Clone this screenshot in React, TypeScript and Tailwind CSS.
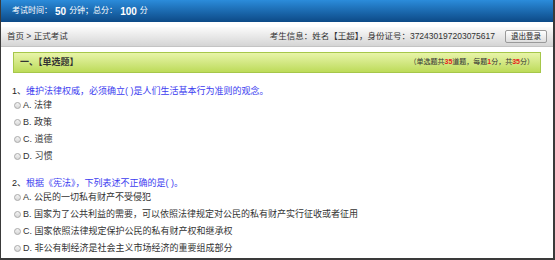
import React from "react";

interface Question {
  no: number;
  title: string;
  options: string[];
}

const questions: Question[] = [
  {
    no: 1,
    title: "维护法律权威，必须确立( )是人们生活基本行为准则的观念。",
    options: ["A. 法律", "B. 政策", "C. 道德", "D. 习惯"],
  },
  {
    no: 2,
    title: "根据《宪法》，下列表述不正确的是( )。",
    options: [
      "A. 公民的一切私有财产不受侵犯",
      "B. 国家为了公共利益的需要，可以依照法律规定对公民的私有财产实行征收或者征用",
      "C. 国家依照法律规定保护公民的私有财产权和继承权",
      "D. 非公有制经济是社会主义市场经济的重要组成部分",
    ],
  },
];

function Radio() {
  return (
    <span className="inline-block w-[7px] h-[7px] rounded-full border border-[#a9a9a9] bg-linear-to-b from-[#f4f4f4] to-[#d8d8d8] mr-[2px] shrink-0" />
  );
}

export default function App() {
  return (
    <div
      className="w-[555px] h-[260px] bg-white border-l border-r-2 border-b-2 border-[#3a3a3a] flex flex-col overflow-hidden text-[#333]"
      style={{ fontFamily: '"Liberation Sans", "Noto Sans CJK SC", sans-serif' }}
    >
      {/* top bar */}
      <div className="h-[22px] shrink-0 bg-linear-to-b from-[#2b8cdb] to-[#0d4a87] flex items-center pl-[11px] text-white text-[8px]">
        <span>考试时间：</span>
        <span className="text-[10px] font-bold mx-[3px]">50</span>
        <span>分钟；总分：</span>
        <span className="text-[10px] font-bold mx-[3px]">100</span>
        <span>分</span>
      </div>

      {/* breadcrumb */}
      <div className="mt-[5px] h-[20px] shrink-0 bg-linear-to-b from-[#fbfbfb] to-[#d5d5d5] border-b border-[#c4c4c4] flex items-center justify-between pl-[6px] pr-[6px] text-[8.5px]">
        <span>首页 &gt; 正式考试</span>
        <div className="flex items-center">
          <span>考生信息：姓名【王超】，身份证号：372430197203075617</span>
          <button className="ml-[10px] h-[13px] w-[42px] flex items-center justify-center border border-[#9a9a9a] rounded-[2px] bg-linear-to-b from-white to-[#dedede] text-[7.5px] text-[#222]">
            退出登录
          </button>
        </div>
      </div>

      {/* section header */}
      <div className="mt-[5px] mx-[12px] h-[21px] shrink-0 border border-[#a6c74a] bg-linear-to-b from-[#e8f4a8] to-[#bddb58] flex items-center justify-between pl-[6px] pr-[6px]">
        <span className="text-[9px] font-bold text-[#333]">一、【单选题】</span>
        <span className="text-[7px] text-[#333]">
          （单选题共<b className="text-[#e8201c]">35</b>道题，每题<b className="text-[#e8201c]">1</b>分，共<b className="text-[#e8201c]">35</b>分）
        </span>
      </div>

      {/* questions */}
      <div className="px-[11px] mt-[12px] flex flex-col gap-[12px] text-[9px]">
        {questions.map((q) => (
          <div key={q.no} className="flex flex-col">
            <div className="h-[12px] leading-[12px]">
              <span className="text-[#222]">{q.no}、</span>
              <span className="text-[#3c3cf0]">{q.title}</span>
            </div>
            {q.options.map((opt) => (
              <div key={opt} className="h-[17px] flex items-center pl-[2px]">
                <Radio />
                <span>{opt}</span>
              </div>
            ))}
          </div>
        ))}
      </div>
    </div>
  );
}
